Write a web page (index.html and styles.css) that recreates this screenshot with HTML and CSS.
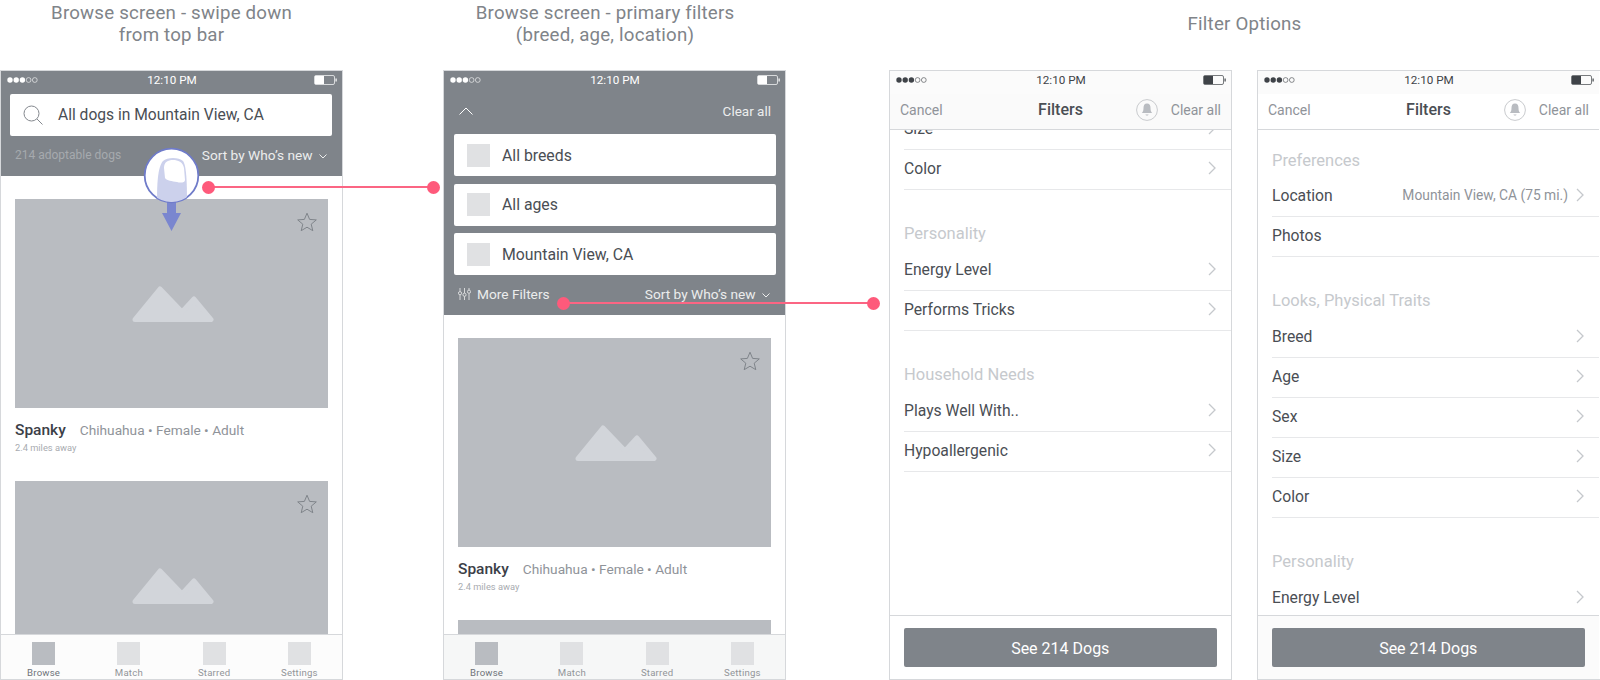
FILE: index.html
```html
<!DOCTYPE html>
<html lang="en">
<head>
  <meta charset="UTF-8" />
  <title>Browse and filter wireframes</title>
  <link rel="stylesheet" href="styles.css">
</head>
<body>
  <svg class="sprite" aria-hidden="true">
    <symbol id="signal" viewBox="0 0 31 6">
      <circle cx="3" cy="3" r="2.7" fill="currentColor" />
      <circle cx="9.2" cy="3" r="2.7" fill="currentColor" />
      <circle cx="15.4" cy="3" r="2.7" fill="currentColor" />
      <circle cx="21.6" cy="3" r="2.4" fill="none" stroke="currentColor" stroke-width=".6" />
      <circle cx="27.8" cy="3" r="2.4" fill="none" stroke="currentColor" stroke-width=".6" />
    </symbol>
    <symbol id="battery" viewBox="0 0 23 10">
      <rect x=".5" y=".5" width="20" height="9" rx="1.5" fill="none" stroke="currentColor" stroke-width=".7" />
      <rect x="1" y="1" width="9" height="8" fill="currentColor" />
      <rect x="21.5" y="3.5" width="1.2" height="3" fill="currentColor" />
    </symbol>
    <symbol id="star" viewBox="0 0 20 20">
      <path d="M10 1.2l2.6 6.2 6.7.5-5.1 4.3 1.6 6.5L10 15.2l-5.800 3.5 1.600-6.500L.7 7.900l6.700-.5z" fill="none" stroke="currentColor" />
    </symbol>
    <symbol id="mountain" viewBox="0 0 82 36">
      <path d="M3 33.500L28 3l22 23L62 13l17 20.500z" fill="currentColor" stroke="currentColor" stroke-width="5" stroke-linejoin="round" />
    </symbol>
    <symbol id="chevron" viewBox="0 0 8 14">
      <path d="M1 1l6 6-6 6" fill="none" stroke="currentColor" stroke-width="1.300" />
    </symbol>
    <symbol id="bell" viewBox="0 0 22 22">
      <circle cx="11" cy="11" r="10.400" fill="none" stroke="#c9cbce" />
      <path d="M11 4.500c-2.600 0-3.500 2-3.500 4.500 0 3-.8 4-1.700 5h10.400c-.9-1-1.700-2-1.700-5 0-2.500-.9-4.500-3.500-4.500z" fill="#b9bcc1" />
      <path d="M9.500 15.500h3c0 1.300-3 1.300-3 0z" fill="#b9bcc1" />
    </symbol>
  </svg>

  <div class="board">
    <h2 class="title col-1">Browse screen - swipe down<br>from top bar</h2>
    <h2 class="title title-shifted col-2">Browse screen - primary filters<br>(breed, age, location)</h2>
    <h2 class="title title-single col-3">Filter Options</h2>

    <!-- browse -->
    <section class="phone col-1">
      <header class="dark-top">
        <div class="status status-light">
          <svg class="signal"><use href="#signal" /></svg>
          <span class="time">12:10 PM</span>
          <svg class="battery"><use href="#battery" /></svg>
        </div>
        <div class="search">
          <svg class="search-icon" viewBox="0 0 20 20">
            <circle cx="8.500" cy="8.500" r="7.500" fill="none" stroke="#84888e" />
            <path d="M14 14l5.500 5.500" stroke="#84888e" />
          </svg>
          <span>All dogs in Mountain View, CA</span>
        </div>
        <div class="sort-row">
          <span class="count">214 adoptable dogs</span>
          <span class="sort">Sort by Who’s new <svg class="chev-down" viewBox="0 0 8 5"><path d="M.5.5L4 4 7.500.5" /></svg></span>
        </div>
      </header>
      <div class="feed">
        <article class="card">
          <div class="photo">
            <svg class="star"><use href="#star" /></svg>
            <svg class="mountain"><use href="#mountain" /></svg>
          </div>
          <p class="dog"><strong>Spanky</strong><span>Chihuahua • Female • Adult</span></p>
          <p class="miles">2.4 miles away</p>
        </article>
        <article class="card">
          <div class="photo">
            <svg class="star"><use href="#star" /></svg>
            <svg class="mountain"><use href="#mountain" /></svg>
          </div>
        </article>
      </div>
      <nav class="tabs">
        <div class="tab tab-active"><i></i>Browse</div>
        <div class="tab"><i></i>Match</div>
        <div class="tab"><i></i>Starred</div>
        <div class="tab"><i></i>Settings</div>
      </nav>
    </section>

    <!-- primary filters -->
    <section class="phone col-2">
      <header class="dark-top">
        <div class="status status-light">
          <svg class="signal"><use href="#signal" /></svg>
          <span class="time">12:10 PM</span>
          <svg class="battery"><use href="#battery" /></svg>
        </div>
        <div class="collapse-row">
          <svg class="chev-up" viewBox="0 0 14 8"><path d="M.5 7.500L7 1l6.500 6.500" /></svg>
          <span>Clear all</span>
        </div>
        <div class="filter-boxes">
          <div class="filter-box"><i></i>All breeds</div>
          <div class="filter-box"><i></i>All ages</div>
          <div class="filter-box"><i></i>Mountain View, CA</div>
        </div>
        <div class="sort-row">
          <span class="more">
            <svg class="sliders" viewBox="0 0 13 12">
              <path d="M2 0v3.500M2 7v5M6.500 0v5M6.500 8.500V12M11 0v2M11 5.500V12" />
              <circle cx="2" cy="5.200" r="1.600" />
              <circle cx="6.500" cy="6.800" r="1.600" />
              <circle cx="11" cy="3.700" r="1.600" />
            </svg>
            More Filters
          </span>
          <span class="sort">Sort by Who’s new <svg class="chev-down" viewBox="0 0 8 5"><path d="M.5.5L4 4 7.500.5" /></svg></span>
        </div>
      </header>
      <div class="feed">
        <article class="card">
          <div class="photo">
            <svg class="star"><use href="#star" /></svg>
            <svg class="mountain"><use href="#mountain" /></svg>
          </div>
          <p class="dog"><strong>Spanky</strong><span>Chihuahua • Female • Adult</span></p>
          <p class="miles">2.4 miles away</p>
        </article>
        <article class="card">
          <div class="photo">
            <svg class="star"><use href="#star" /></svg>
          </div>
        </article>
      </div>
      <nav class="tabs tabs-grey">
        <div class="tab tab-active"><i></i>Browse</div>
        <div class="tab"><i></i>Match</div>
        <div class="tab"><i></i>Starred</div>
        <div class="tab"><i></i>Settings</div>
      </nav>
    </section>

    <!-- filter options, scrolled -->
    <section class="phone col-3">
      <div class="status">
        <svg class="signal"><use href="#signal" /></svg>
        <span class="time">12:10 PM</span>
        <svg class="battery"><use href="#battery" /></svg>
      </div>
      <div class="filters-nav">
        <span class="nav-link">Cancel</span>
        <strong>Filters</strong>
        <div class="nav-right">
          <svg class="bell"><use href="#bell" /></svg>
          <span class="nav-link">Clear all</span>
        </div>
      </div>
      <div class="options options-scrolled">
        <div class="option">Size<svg class="chevron"><use href="#chevron" /></svg></div>
        <div class="option">Color<svg class="chevron"><use href="#chevron" /></svg></div>
        <h3 class="option-head">Personality</h3>
        <div class="option">Energy Level<svg class="chevron"><use href="#chevron" /></svg></div>
        <div class="option">Performs Tricks<svg class="chevron"><use href="#chevron" /></svg></div>
        <h3 class="option-head">Household Needs</h3>
        <div class="option">Plays Well With..<svg class="chevron"><use href="#chevron" /></svg></div>
        <div class="option">Hypoallergenic<svg class="chevron"><use href="#chevron" /></svg></div>
      </div>
      <div class="see-bar"><button class="see-btn">See 214 Dogs</button></div>
    </section>

    <!-- filter options, top -->
    <section class="phone phone-cut col-4">
      <div class="status">
        <svg class="signal"><use href="#signal" /></svg>
        <span class="time">12:10 PM</span>
        <svg class="battery"><use href="#battery" /></svg>
      </div>
      <div class="filters-nav filters-nav-white">
        <span class="nav-link">Cancel</span>
        <strong>Filters</strong>
        <div class="nav-right">
          <svg class="bell"><use href="#bell" /></svg>
          <span class="nav-link">Clear all</span>
        </div>
      </div>
      <div class="options">
        <h3 class="option-head option-head-first">Preferences</h3>
        <div class="option">Location<span class="option-value">Mountain View, CA (75 mi.)</span><svg class="chevron"><use href="#chevron" /></svg></div>
        <div class="option">Photos</div>
        <h3 class="option-head">Looks, Physical Traits</h3>
        <div class="option">Breed<svg class="chevron"><use href="#chevron" /></svg></div>
        <div class="option">Age<svg class="chevron"><use href="#chevron" /></svg></div>
        <div class="option">Sex<svg class="chevron"><use href="#chevron" /></svg></div>
        <div class="option">Size<svg class="chevron"><use href="#chevron" /></svg></div>
        <div class="option">Color<svg class="chevron"><use href="#chevron" /></svg></div>
        <h3 class="option-head">Personality</h3>
        <div class="option">Energy Level<svg class="chevron"><use href="#chevron" /></svg></div>
      </div>
      <div class="see-bar see-bar-grey"><button class="see-btn">See 214 Dogs</button></div>
    </section>

    <!-- annotations on top of the screens -->
    <div class="link link-a"></div>
    <div class="link link-b"></div>
    <svg class="touch" viewBox="0 0 60 87">
      <defs>
        <clipPath id="touch-clip"><circle cx="29.500" cy="29.500" r="26.500" /></clipPath>
      </defs>
      <path d="M25 56h9v11h5L29.500 85 20 67h5z" fill="#7a86cf" />
      <circle cx="29.500" cy="29.500" r="26.800" fill="#fff" stroke="#6f7bc9" stroke-width="1.800" />
      <g clip-path="url(#touch-clip)">
        <path d="M15 60C15 42 15 22 21 15c4-4 16-4 20 0 4 5 4 28 4 45z" fill="#ccd1ec" />
        <path d="M22 22c0-6 4-8 9-8s10 2 11 8l1 12c0 3-5 3-8 2-5-1-10-1-12-4z" fill="#fff" />
      </g>
    </svg>
  </div>
</body>
</html>
```

FILE: styles.css
```css
:root {
  --slate: #7f848a;
  --photo: #b9bcc1;
  --square: #e0e1e3;
  --line: #d6d8db;
  --divider: #e7e8ea;
  --ink: #4a4e54;
  --muted: #8f9399;
  --pink: #fe5a7b;
}

* {
  box-sizing: border-box;
}

html, body {
  margin: 0;
  height: 680px;
  overflow: hidden;
  background: #fff;
}

body {
  font-family: Roboto, "Liberation Sans", sans-serif;
  color: var(--ink);
}

.sprite {
  display: none;
}

.board {
  position: relative;
  display: grid;
  grid-template-columns: 343px 100px 343px 103px 343px 25px 343px;
  grid-template-rows: 70px 610px;
  width: 1600px;
}

.col-1 { grid-column: 1; }
.col-2 { grid-column: 3; }
.col-3 { grid-column: 5; }
.col-4 { grid-column: 7; }

.title {
  margin: 0;
  padding-top: 2px;
  font-size: 18.700px;
  font-weight: 400;
  line-height: 22px;
  letter-spacing: .2px;
  text-align: center;
  color: #808489;
  white-space: nowrap;
}

.title-shifted {
  padding-right: 19px;
}

.title-single {
  grid-column: 5 / 8;
  padding-top: 13px;
}

.phone {
  grid-row: 2;
  display: flex;
  flex-direction: column;
  height: 610px;
  border: 1px solid var(--line);
  overflow: hidden;
  background: #fff;
}

/* last screen runs off the edge of the board */
.phone-cut {
  border-right: 0;
  padding-right: 1px;
}

.dark-top {
  flex: none;
  background: var(--slate);
}

/* status bar */
.status {
  flex: none;
  display: grid;
  grid-template-columns: 1fr auto 1fr;
  align-items: center;
  height: 23px;
  padding: 0 5px 5px 6px;
  color: #3f4348;
  background: #fbfbfb;
}

.status-light {
  color: #fff;
  background: none;
}

.signal {
  width: 31px;
  height: 6px;
}

.battery {
  justify-self: end;
  width: 23px;
  height: 10px;
}

.time {
  font-size: 11.700px;
  line-height: 14px;
}

/* search + sort */
.search {
  display: flex;
  align-items: center;
  height: 42px;
  margin: 0 10px 0 9px;
  padding-left: 13px;
  border-radius: 2px;
  background: #fff;
  font-size: 15.600px;
}

.search-icon {
  width: 20px;
  height: 20px;
  margin-right: 15px;
}

.sort-row {
  display: flex;
  justify-content: space-between;
  align-items: center;
  height: 40px;
  padding: 0 15px 2px 14px;
  font-size: 13.700px;
}

.count {
  color: #a6aaae;
  font-size: 12px;
}

.sort {
  color: #eceded;
}

.chev-down {
  width: 8px;
  height: 5px;
  margin-left: 3px;
  vertical-align: 1px;
  fill: none;
  stroke: #eceded;
}

.more {
  display: flex;
  align-items: center;
  gap: 6px;
  color: #eceded;
}

.sliders {
  width: 13px;
  height: 12px;
  fill: none;
  stroke: #eceded;
  stroke-width: .8;
}

/* primary filters */
.collapse-row {
  display: flex;
  justify-content: space-between;
  align-items: center;
  height: 34px;
  margin-bottom: 6px;
  padding: 0 14px 0 15px;
  color: #eceded;
  font-size: 13.500px;
}

.chev-up {
  width: 14px;
  height: 8px;
  fill: none;
  stroke: #fff;
}

.filter-boxes {
  display: flex;
  flex-direction: column;
  gap: 7.500px;
  margin: 0 9px 0 10px;
}

.filter-box {
  display: flex;
  align-items: center;
  gap: 12px;
  height: 42px;
  padding-left: 13px;
  border-radius: 2px;
  background: #fff;
  font-size: 15.800px;
}

.filter-box i {
  width: 23px;
  height: 23px;
  background: var(--square);
}

/* dog cards */
.feed {
  flex: 1;
  min-height: 0;
  overflow: hidden;
  padding: 23px 14.500px 0 14px;
}

.card {
  height: 282px;
}

.photo {
  position: relative;
  display: flex;
  justify-content: center;
  align-items: center;
  height: 209px;
  background: var(--photo);
}

.star {
  position: absolute;
  top: 13px;
  right: 11px;
  width: 20px;
  height: 20px;
  color: #7f848a;
}

.mountain {
  width: 82px;
  height: 36px;
  margin-left: 3px;
  color: #d2d5da;
}

.dog {
  display: flex;
  align-items: baseline;
  gap: 14px;
  margin: 13px 0 0;
  line-height: 18px;
}

.dog strong {
  font-size: 15.500px;
  font-weight: 500;
  color: #3c4047;
}

.dog span {
  font-size: 13.700px;
  color: var(--muted);
}

.miles {
  margin: 2px 0 0;
  font-size: 9.300px;
  line-height: 14px;
  color: #a8abb0;
}

/* tab bar */
.tabs {
  flex: none;
  display: flex;
  height: 45px;
  border-top: 1px solid var(--line);
  background: #fcfcfc;
}

.tabs-grey {
  background: #f6f7f7;
}

.tab {
  flex: 1;
  display: flex;
  flex-direction: column;
  align-items: center;
  padding-top: 7px;
  font-size: 9.600px;
  line-height: 15px;
  letter-spacing: .2px;
  color: #929599;
}

.tab i {
  flex: none;
  width: 23px;
  height: 23px;
  background: var(--square);
}

.tab-active {
  color: #6f7379;
}

.tab-active i {
  background: var(--photo);
}

/* filter options */
.filters-nav {
  flex: none;
  display: grid;
  grid-template-columns: 1fr auto 1fr;
  align-items: center;
  height: 36px;
  padding: 0 10px 4px 10px;
  border-bottom: 1px solid var(--line);
  background: #fafafa;
}

.filters-nav-white {
  background: #fff;
}

.filters-nav strong {
  font-size: 16px;
  font-weight: 500;
}

.nav-link {
  font-size: 14px;
  color: var(--muted);
}

.nav-right {
  display: flex;
  justify-content: flex-end;
  align-items: center;
  gap: 13px;
}

.bell {
  width: 22px;
  height: 22px;
}

.options {
  flex: 1;
  min-height: 0;
  overflow: hidden;
}

.options-scrolled .option:first-child {
  margin-top: -20px;
}

.option {
  display: flex;
  align-items: center;
  height: 40px;
  margin-left: 14px;
  padding-right: 15px;
  padding-bottom: 3px;
  border-bottom: 1px solid var(--divider);
  font-size: 15.700px;
}

.option-value {
  margin-left: auto;
  margin-right: 8px;
  font-size: 13.800px;
  color: var(--muted);
}

.chevron {
  width: 8px;
  height: 14px;
  margin-left: auto;
  color: #c5c8cc;
}

.option-value + .chevron {
  margin-left: 0;
}

.option-head {
  height: 48px;
  margin: 13px 0 0 14px;
  padding-top: 21px;
  font-size: 16.500px;
  font-weight: 400;
  line-height: 20px;
  color: #c6c9cd;
}

.option-head-first {
  height: 47px;
  margin-top: 0;
}

.see-bar {
  flex: none;
  height: 64px;
  padding: 12px 14.500px 12px 14px;
  border-top: 1px solid var(--line);
  background: #fff;
}

.see-bar-grey {
  background: #fbfbfb;
}

.see-btn {
  display: block;
  width: 100%;
  height: 39px;
  padding-top: 2px;
  border: 0;
  border-radius: 2px;
  background: var(--slate);
  color: #fff;
  font: 400 16px Roboto, "Liberation Sans", sans-serif;
}

/* annotations */
.link {
  position: absolute;
  height: 2px;
  background: #fb6583;
}

.link::before,
.link::after {
  content: "";
  position: absolute;
  top: -5.500px;
  width: 13px;
  height: 13px;
  border-radius: 50%;
  background: var(--pink);
}

.link::before { left: -6.500px; }
.link::after { right: -6.500px; }

.link-a {
  top: 186px;
  left: 208px;
  width: 225px;
}

.link-b {
  top: 302px;
  left: 563px;
  width: 310px;
}

.touch {
  position: absolute;
  top: 146px;
  left: 142px;
  width: 60px;
  height: 87px;
}
```
